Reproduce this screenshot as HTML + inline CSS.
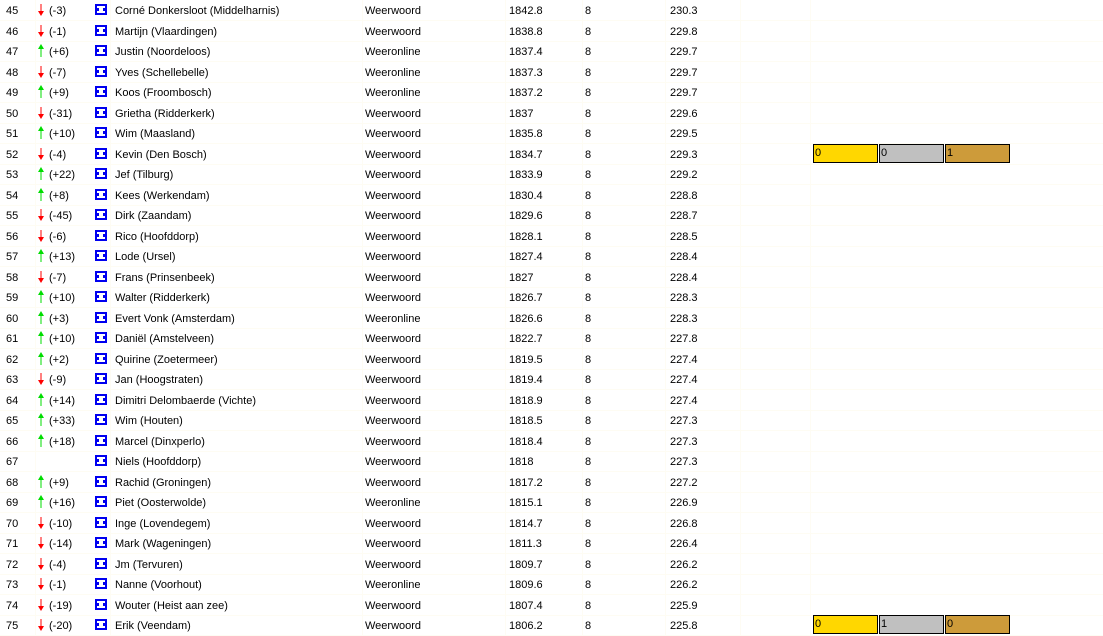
<!DOCTYPE html>
<html><head><meta charset="utf-8"><style>
body{margin:0;background:#fff;width:1103px;height:635px;overflow:hidden;font-family:"Liberation Sans",Arial,sans-serif;font-size:11px;color:#000}
.r{position:absolute;left:0;width:1103px;height:20px;border-bottom:1px solid #fefcf3}
.r span{position:absolute;top:5px;white-space:nowrap}
svg{position:absolute}
.b{position:absolute;top:0;width:62px;height:17px;border:1px solid #000;font-size:11px;line-height:17px;padding-left:1px;box-sizing:content-box}
.vl{position:absolute;top:0;height:635px;width:1px;background:#fefcf4}
</style></head><body>
<div class="vl" style="left:35px"></div><div class="vl" style="left:110px"></div><div class="vl" style="left:362px"></div><div class="vl" style="left:505px"></div><div class="vl" style="left:582px"></div><div class="vl" style="left:665px"></div><div class="vl" style="left:740px"></div><div class="vl" style="left:810px"></div>
<div id="rows"></div>
<script>
var d=[
[45,-3,"Corné Donkersloot (Middelharnis)","Weerwoord","1842.8","230.3"],
[46,-1,"Martijn (Vlaardingen)","Weerwoord","1838.8","229.8"],
[47,6,"Justin (Noordeloos)","Weeronline","1837.4","229.7"],
[48,-7,"Yves (Schellebelle)","Weeronline","1837.3","229.7"],
[49,9,"Koos (Froombosch)","Weeronline","1837.2","229.7"],
[50,-31,"Grietha (Ridderkerk)","Weerwoord","1837","229.6"],
[51,10,"Wim (Maasland)","Weerwoord","1835.8","229.5"],
[52,-4,"Kevin (Den Bosch)","Weerwoord","1834.7","229.3"],
[53,22,"Jef (Tilburg)","Weerwoord","1833.9","229.2"],
[54,8,"Kees (Werkendam)","Weerwoord","1830.4","228.8"],
[55,-45,"Dirk (Zaandam)","Weerwoord","1829.6","228.7"],
[56,-6,"Rico (Hoofddorp)","Weerwoord","1828.1","228.5"],
[57,13,"Lode (Ursel)","Weerwoord","1827.4","228.4"],
[58,-7,"Frans (Prinsenbeek)","Weerwoord","1827","228.4"],
[59,10,"Walter (Ridderkerk)","Weerwoord","1826.7","228.3"],
[60,3,"Evert Vonk (Amsterdam)","Weeronline","1826.6","228.3"],
[61,10,"Daniël (Amstelveen)","Weerwoord","1822.7","227.8"],
[62,2,"Quirine (Zoetermeer)","Weerwoord","1819.5","227.4"],
[63,-9,"Jan (Hoogstraten)","Weerwoord","1819.4","227.4"],
[64,14,"Dimitri Delombaerde (Vichte)","Weerwoord","1818.9","227.4"],
[65,33,"Wim (Houten)","Weerwoord","1818.5","227.3"],
[66,18,"Marcel (Dinxperlo)","Weerwoord","1818.4","227.3"],
[67,0,"Niels (Hoofddorp)","Weerwoord","1818","227.3"],
[68,9,"Rachid (Groningen)","Weerwoord","1817.2","227.2"],
[69,16,"Piet (Oosterwolde)","Weeronline","1815.1","226.9"],
[70,-10,"Inge (Lovendegem)","Weerwoord","1814.7","226.8"],
[71,-14,"Mark (Wageningen)","Weerwoord","1811.3","226.4"],
[72,-4,"Jm (Tervuren)","Weerwoord","1809.7","226.2"],
[73,-1,"Nanne (Voorhout)","Weeronline","1809.6","226.2"],
[74,-19,"Wouter (Heist aan zee)","Weerwoord","1807.4","225.9"],
[75,-20,"Erik (Veendam)","Weerwoord","1806.2","225.8"]];
var h="";
d.forEach(function(x,i){
 var t=i*20.5;
 h+='<div class="r" style="top:'+t+'px">';
 h+='<span style="left:6px">'+x[0]+'</span>';
 if(x[1]<0){h+='<svg style="left:37px;top:4px" width="8" height="13"><rect x="3.5" y="0" width="1" height="10" fill="#f00"/><path d="M1 7h6l-3 5z" fill="#f00"/></svg><span style="left:49px">(-'+(-x[1])+')</span>';}
 else if(x[1]>0){h+='<svg style="left:37px;top:3px" width="8" height="13"><rect x="3.5" y="3" width="1" height="10" fill="#0d0"/><path d="M1 5h6l-3-5z" fill="#0d0"/></svg><span style="left:49px">(+'+x[1]+')</span>';}
 h+='<svg style="left:95px;top:4px" width="12" height="11"><rect width="12" height="11" fill="#0000f0"/><rect x="2" y="2" width="8" height="7" fill="#fff"/><rect x="2" y="4" width="2" height="3" fill="#0000f0"/><rect x="8" y="4" width="2" height="3" fill="#0000f0"/></svg>';
 h+='<span style="left:115px">'+x[2]+'</span><span style="left:365px">'+x[3]+'</span><span style="left:509px">'+x[4]+'</span><span style="left:585px">8</span><span style="left:670px">'+x[5]+'</span>';
 if(x[0]==52||x[0]==75){var v=x[0]==52?["0","0","1"]:["0","1","0"];
  h+='<div class="b" style="left:813px;top:0px;background:#ffd700">'+v[0]+'</div><div class="b" style="left:879px;top:0px;background:#c0c0c0">'+v[1]+'</div><div class="b" style="left:945px;top:0px;background:#cd9b3a">'+v[2]+'</div>';}
 h+='</div>';
});
document.getElementById("rows").innerHTML=h;
</script>
</body></html>
